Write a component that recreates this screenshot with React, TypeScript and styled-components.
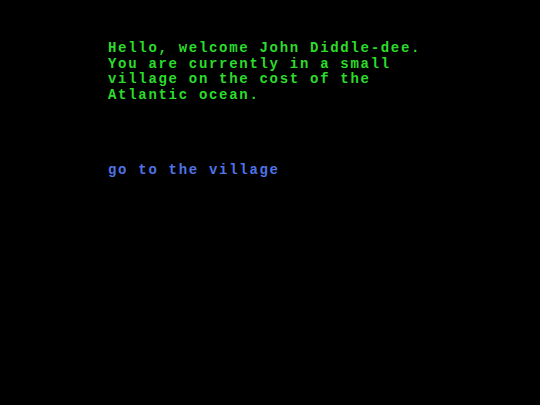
import styled, { createGlobalStyle } from "styled-components";

const GlobalStyle = createGlobalStyle`
  html, body {
    margin: 0;
    padding: 0;
    background: #000;
  }
  body {
    width: 540px;
    height: 405px;
    overflow: hidden;
  }
`;

const App = () => {
  return (
    <>
      <GlobalStyle />
      <Screen>
        <Story>
          Hello, welcome John Diddle-dee.
          <br />
          You are currently in a small
          <br />
          village on the cost of the
          <br />
          Atlantic ocean.
        </Story>
        <Choices>
          <Choice href="#">go to the village</Choice>
        </Choices>
      </Screen>
    </>
  );
};

export default App;

const Screen = styled.div`
  width: 540px;
  height: 405px;
  box-sizing: border-box;
  padding: 41px 0 0 108px;
  background: #000;
  display: flex;
  flex-direction: column;
  gap: 59px;
  font-family: "Liberation Mono", "DejaVu Sans Mono", monospace;
  font-weight: bold;
  font-size: 14px;
  letter-spacing: 1.7px;
  line-height: 15.67px;
`;

const Story = styled.div`
  color: #2bdc2b;
  white-space: nowrap;
`;

const Choices = styled.div`
  display: flex;
  flex-direction: column;
  gap: 8px;
`;

const Choice = styled.a`
  color: #4f73e6;
  text-decoration: none;
  cursor: pointer;
`;
